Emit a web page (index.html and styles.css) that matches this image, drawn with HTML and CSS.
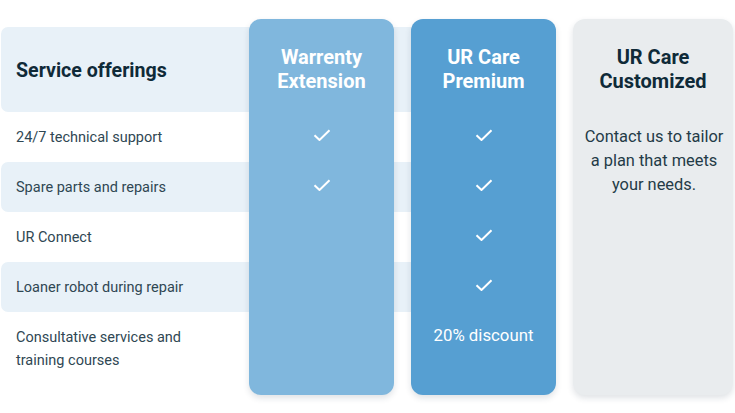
FILE: index.html
```html
<!DOCTYPE html>
<html lang="en">
<head>
<meta charset="utf-8">
<title>Service offerings</title>
<link rel="stylesheet" href="styles.css">
</head>
<body>
<div class="compare">
  <div class="rows">
    <div class="row row-head band"><h2>Service offerings</h2></div>
    <div class="row">24/7 technical support</div>
    <div class="row band">Spare parts and repairs</div>
    <div class="row">UR Connect</div>
    <div class="row band">Loaner robot during repair</div>
    <div class="row row-tall">Consultative services and<br>training courses</div>
  </div>
  <div class="cards">
    <div class="card card-ext">
      <h3 class="card-title">Warrenty<br>Extension</h3>
      <div class="cell"><svg class="check" viewBox="0 0 18 12"><path d="M1.5 6.2 L6.5 11 L16.5 1.2"/></svg></div>
      <div class="cell"><svg class="check" viewBox="0 0 18 12"><path d="M1.5 6.2 L6.5 11 L16.5 1.2"/></svg></div>
      <div class="cell"></div>
      <div class="cell"></div>
      <div class="cell"></div>
    </div>
    <div class="card card-prem">
      <h3 class="card-title">UR Care<br>Premium</h3>
      <div class="cell"><svg class="check" viewBox="0 0 18 12"><path d="M1.5 6.2 L6.5 11 L16.5 1.2"/></svg></div>
      <div class="cell"><svg class="check" viewBox="0 0 18 12"><path d="M1.5 6.2 L6.5 11 L16.5 1.2"/></svg></div>
      <div class="cell"><svg class="check" viewBox="0 0 18 12"><path d="M1.5 6.2 L6.5 11 L16.5 1.2"/></svg></div>
      <div class="cell"><svg class="check" viewBox="0 0 18 12"><path d="M1.5 6.2 L6.5 11 L16.5 1.2"/></svg></div>
      <div class="cell cell-text">20% discount</div>
    </div>
    <div class="card card-custom">
      <h3 class="card-title">UR Care<br>Customized</h3>
      <p class="custom-text">Contact us to tailor<br>a plan that meets<br>your needs.</p>
    </div>
  </div>
</div>
</body>
</html>
```

FILE: styles.css
```css
* { box-sizing: border-box; }

html, body {
  margin: 0;
  padding: 0;
  background: #ffffff;
}

body {
  font-family: Roboto, "Liberation Sans", sans-serif;
  width: 735px;
  height: 413px;
  overflow: hidden;
}

.compare {
  display: grid;
  width: 735px;
  height: 413px;
}

.rows,
.cards {
  grid-area: 1 / 1;
}

.rows {
  padding-top: 27px;
  padding-left: 1px;
  width: 556px;
  display: flex;
  flex-direction: column;
}

.row {
  height: 50px;
  display: flex;
  align-items: center;
  padding-left: 15px;
  font-size: 14.5px;
  color: #2f4753;
  border-radius: 7px 0 0 7px;
}

.row-head {
  height: 85px;
  padding-top: 2px;
}

.row-head h2 {
  margin: 0;
  font-size: 19.6px;
  font-weight: 700;
  color: #0f2a38;
}

.row-tall {
  height: 74px;
  line-height: 23.5px;
  padding-top: 0;
}

.band {
  background: #e8f1f8;
}

.cards {
  padding-top: 19px;
  padding-left: 249px;
  display: flex;
  gap: 17px;
  align-items: flex-start;
}

.card {
  width: 145px;
  height: 376px;
  border-radius: 12px;
  box-shadow: 0 3px 6px rgba(30, 50, 70, 0.14);
  display: flex;
  flex-direction: column;
  align-items: center;
  color: #ffffff;
}

.card-ext { background: #80b7dd; }
.card-prem { background: #569fd2; }
.card-custom {
  width: 160px;
  background: #e9ecee;
  color: #0f2a38;
}

.card-title {
  margin: 0;
  height: 93px;
  padding-top: 26px;
  font-size: 20px;
  line-height: 24px;
  font-weight: 700;
  text-align: center;
}

.cell {
  width: 100%;
  height: 50px;
  display: flex;
  align-items: center;
  justify-content: center;
  padding-bottom: 4px;
}

.cell-text {
  font-size: 16.8px;
  padding-bottom: 4px;
}

.check {
  width: 18px;
  height: 12px;
  fill: none;
  stroke: #ffffff;
  stroke-width: 2;
}

.custom-text {
  margin: 0;
  padding-top: 13px;
  padding-left: 2px;
  font-size: 16.4px;
  line-height: 24px;
  text-align: center;
  color: #243b47;
}
```
